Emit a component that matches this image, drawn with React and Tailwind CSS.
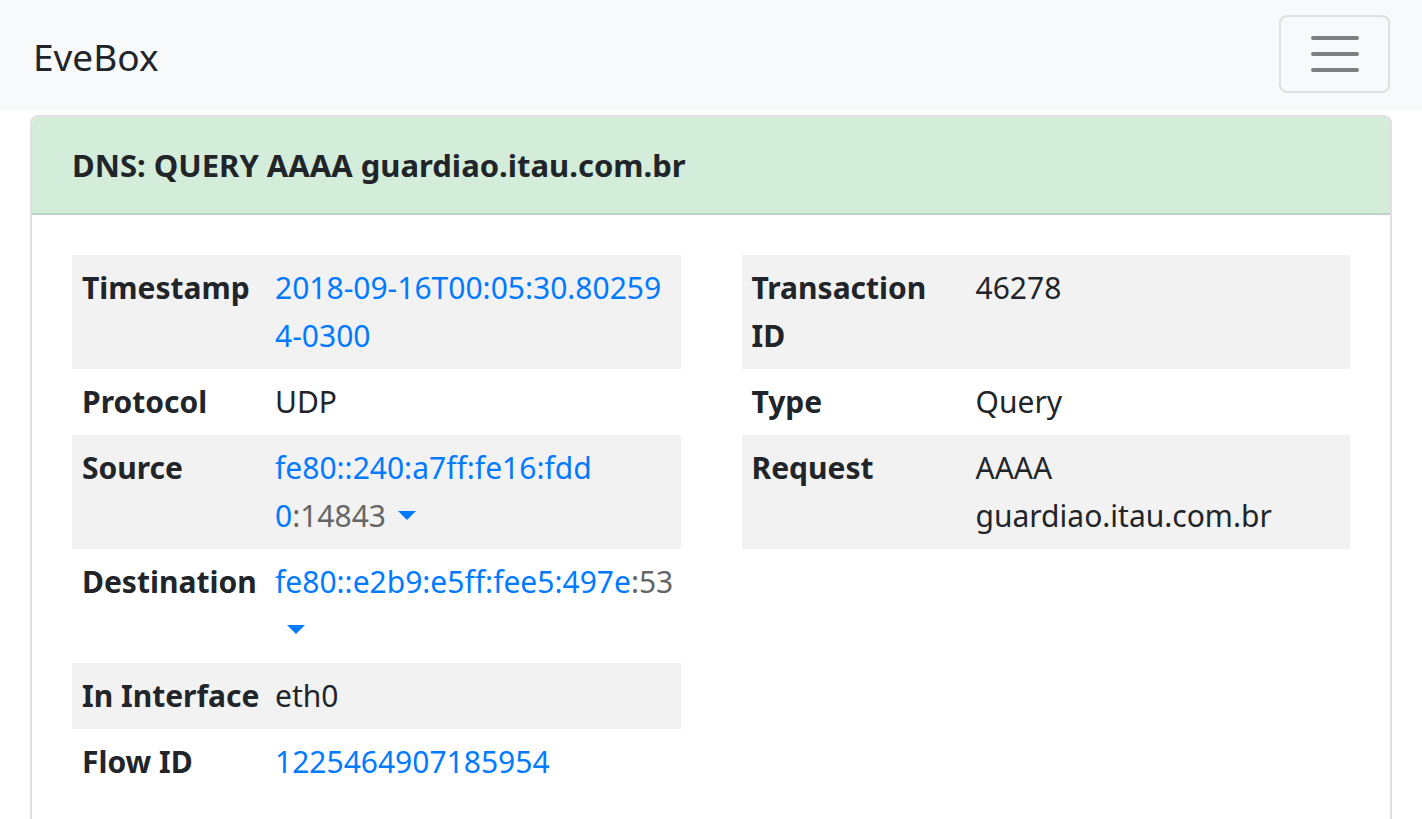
import React from 'react'

const font = { fontFamily: '"Noto Sans", "Open Sans", sans-serif' }

const Port = ({ children }) => <span className="text-[#666666]">{children}</span>

const Caret = () => (
  <span className="inline-block align-middle ml-[12px] w-0 h-0 border-l-[9px] border-r-[9px] border-t-[9px] border-l-transparent border-r-transparent border-t-[#007bff] mb-[6px]" />
)

const Row = ({ label, labelW, striped, children }) => (
  <div className={`flex ${striped ? 'bg-[#f2f2f2]' : 'bg-white'}`}>
    <div className={`${labelW} shrink-0 px-[10px] py-[9px] font-bold whitespace-nowrap`}>{label}</div>
    <div className="flex-1 px-[10px] py-[9px] whitespace-nowrap">{children}</div>
  </div>
)

function App() {
  return (
    <div style={font} className="min-h-screen bg-white text-[#212529] text-[30px] leading-[48px]">
      <nav className="h-[110px] bg-[#f8f9fa] flex items-start justify-between pl-[33px] pr-[32px]">
        <span className="text-[37px] leading-[60px] mt-[27px]">EveBox</span>
        <button className="mt-[15px] w-[111px] h-[78px] border-2 border-black/10 rounded-[8px] flex flex-col items-center justify-center gap-[12px]">
          <span className="block w-[48px] h-[4px] rounded-full bg-[#7f7f7f]" />
          <span className="block w-[48px] h-[4px] rounded-full bg-[#7f7f7f]" />
          <span className="block w-[48px] h-[4px] rounded-full bg-[#7f7f7f]" />
        </button>
      </nav>

      <div className="px-[30px] pt-[5px]">
        <div className="border-2 border-[#e0e0e0] rounded-[8px] overflow-hidden">
          <div className="bg-[#d4edda] border-b-2 border-[#bcd3c1] px-[40px] py-[24px] font-bold text-[31px]">
            DNS: QUERY AAAA guardiao.itau.com.br
          </div>
          <div className="p-[40px] grid grid-cols-2 gap-x-[61px] items-start">
            <div>
              <Row label="Timestamp" labelW="w-[193px]" striped>
                <span className="block text-[#007bff]">2018-09-16T00:05:30.80259</span>
                <span className="block text-[#007bff]">4-0300</span>
              </Row>
              <Row label="Protocol" labelW="w-[193px]">UDP</Row>
              <Row label="Source" labelW="w-[193px]" striped>
                <span className="block text-[#007bff]">fe80::240:a7ff:fe16:fdd</span>
                <span className="block">
                  <span className="text-[#007bff]">0</span>
                  <Port>:14843</Port>
                  <Caret />
                </span>
              </Row>
              <Row label="Destination" labelW="w-[193px]">
                <span className="block">
                  <span className="text-[#007bff]">fe80::e2b9:e5ff:fee5:497e</span>
                  <Port>:53</Port>
                </span>
                <span className="block">
                  <Caret />
                </span>
              </Row>
              <Row label="In Interface" labelW="w-[193px]" striped>eth0</Row>
              <Row label="Flow ID" labelW="w-[193px]">
                <span className="text-[#007bff]">1225464907185954</span>
              </Row>
            </div>
            <div>
              <Row label={<><span className="block">Transaction</span><span className="block">ID</span></>} labelW="w-[224px]" striped>
                46278
              </Row>
              <Row label="Type" labelW="w-[224px]">Query</Row>
              <Row label="Request" labelW="w-[224px]" striped>
                <span className="block">AAAA</span>
                <span className="block">guardiao.itau.com.br</span>
              </Row>
            </div>
          </div>
        </div>
      </div>
    </div>
  )
}

export default App
